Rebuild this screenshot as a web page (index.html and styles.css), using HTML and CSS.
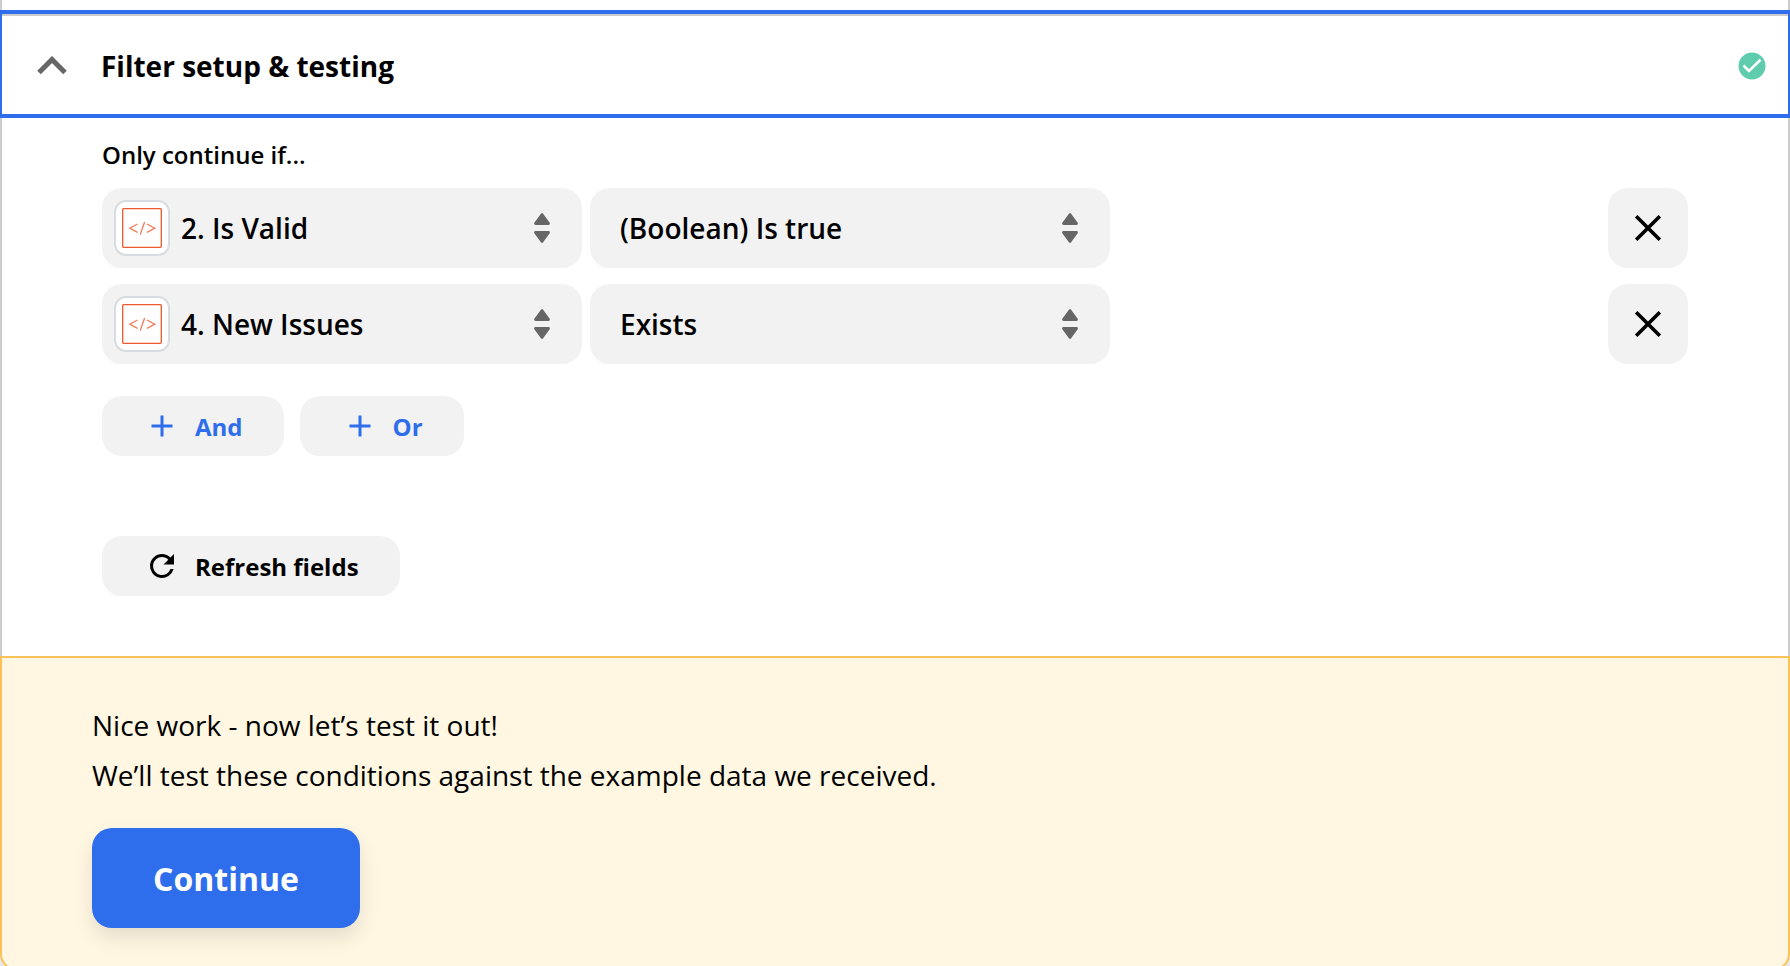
FILE: index.html
```html
<!DOCTYPE html>
<html lang="en">
<head>
<meta charset="utf-8">
<meta name="viewport" content="width=device-width, initial-scale=1">
<title>Filter setup &amp; testing</title>
<link rel="stylesheet" href="styles.css">
</head>
<body>
<svg class="sprite" aria-hidden="true">
  <symbol id="code" viewBox="0 0 40 40">
    <rect x="0.7" y="0.7" width="38.6" height="38.6" rx="0.8" fill="#fff" stroke="#f0592b" stroke-width="1.3"/>
    <path d="M15.5 16 7.8 20.2l7.7 4.2M25 16l7.7 4.2-7.7 4.2M22.6 14l-4.4 12.6" fill="none" stroke="#f27a55" stroke-width="1.3"/>
  </symbol>
  <symbol id="sort" viewBox="0 0 16 30">
    <path d="M6.9.8.5 9.4C-.3 10.500.2 12 1.500 12h13c1.300 0 1.800-1.500 1-2.600L9.100.8a1.400 1.400 0 0 0-2.200 0ZM6.900 29.200.5 20.600C-.3 19.500.2 18 1.500 18h13c1.300 0 1.800 1.500 1 2.600l-6.400 8.600a1.400 1.400 0 0 1-2.200 0Z" fill="#666"/>
  </symbol>
  <symbol id="close" viewBox="0 0 28 28">
    <path d="m2.200 2.200 23.600 23.600m0-23.600L2.200 25.800" fill="none" stroke="#000" stroke-width="3.600"/>
  </symbol>
  <symbol id="plus" viewBox="0 0 36 36">
    <path d="M18 7.500v21M7.500 18h21" fill="none" stroke="#2e6eec" stroke-width="3"/>
  </symbol>
</svg>
<main class="step">
  <div class="step-lead"></div>
  <header class="step-header">
    <button class="toggle" type="button" aria-expanded="true" aria-controls="filter-body">
      <svg class="chevron" viewBox="0 0 30 20" aria-hidden="true"><path d="M2 16.500 15 3.500l13 13" fill="none" stroke="#666" stroke-width="5"/></svg>
      <span class="title">Filter setup &amp; testing</span>
    </button>
    <svg class="status" viewBox="0 0 28 28" role="img" aria-label="Complete"><circle cx="14" cy="14" r="13.500" fill="#5fcdad"/><path d="m5.500 13.500 5.500 5.500L22.500 7.800" fill="none" stroke="#fff" stroke-width="2.600"/></svg>
  </header>

  <section class="filters" id="filter-body">
    <h2 class="filters-label">Only continue if...</h2>
    <div class="conditions">
      <div class="condition">
        <div class="field">
          <select class="select has-icon" aria-label="First field"><option>2. Is Valid</option></select>
          <span class="app-icon"><svg viewBox="0 0 40 40" aria-hidden="true"><use href="#code"/></svg></span>
          <svg class="sort" viewBox="0 0 16 30" aria-hidden="true"><use href="#sort"/></svg>
        </div>
        <div class="field">
          <select class="select" aria-label="First rule"><option>(Boolean) Is true</option></select>
          <svg class="sort" viewBox="0 0 16 30" aria-hidden="true"><use href="#sort"/></svg>
        </div>
        <button class="remove" type="button" aria-label="Remove first condition"><svg viewBox="0 0 28 28" aria-hidden="true"><use href="#close"/></svg></button>
      </div>
      <div class="condition">
        <div class="field">
          <select class="select has-icon" aria-label="Second field"><option>4. New Issues</option></select>
          <span class="app-icon"><svg viewBox="0 0 40 40" aria-hidden="true"><use href="#code"/></svg></span>
          <svg class="sort" viewBox="0 0 16 30" aria-hidden="true"><use href="#sort"/></svg>
        </div>
        <div class="field">
          <select class="select" aria-label="Second rule"><option>Exists</option></select>
          <svg class="sort" viewBox="0 0 16 30" aria-hidden="true"><use href="#sort"/></svg>
        </div>
        <button class="remove" type="button" aria-label="Remove second condition"><svg viewBox="0 0 28 28" aria-hidden="true"><use href="#close"/></svg></button>
      </div>
    </div>
    <div class="actions">
      <button class="action add" type="button"><svg viewBox="0 0 36 36" aria-hidden="true"><use href="#plus"/></svg>And</button>
      <button class="action add" type="button"><svg viewBox="0 0 36 36" aria-hidden="true"><use href="#plus"/></svg>Or</button>
    </div>
    <button class="action" type="button"><svg viewBox="0 0 24 24" aria-hidden="true"><path d="M17.650 6.350A7.960 7.960 0 0 0 12 4a8 8 0 1 0 7.730 10h-2.080A6 6 0 1 1 12 6c1.660 0 3.140.690 4.220 1.780L13 11h7V4z"/></svg>Refresh fields</button>
  </section>

  <section class="test">
    <p class="test-text">Nice work - now let’s test it out!</p>
    <p class="test-text">We’ll test these conditions against the example data we received.</p>
    <button class="continue" type="button">Continue</button>
  </section>
</main>
</body>
</html>
```
FILE: styles.css
```css
* {
  box-sizing: border-box;
}

body {
  height: 100vh;
  margin: 0;
  overflow: hidden;
  background: #e8e8e8;
  color: #000;
  font-family: "Open Sans", "Noto Sans", sans-serif;
}

button,
select {
  margin: 0;
  border: 0;
  color: inherit;
  font: inherit;
  cursor: pointer;
}

svg {
  display: block;
  flex: none;
}

.sprite {
  position: absolute;
  width: 0;
  height: 0;
}

.step-lead {
  height: 10px;
  border: solid #ccc;
  border-width: 0 2px;
  background: #fff;
}

.step-header {
  display: flex;
  align-items: center;
  justify-content: space-between;
  height: 108px;
  padding: 4px 22px 0 35px;
  border: solid #2e6eec;
  border-width: 4px 2px;
  background: #fff;
  box-shadow: inset 0 2px #ccc;
}

.toggle {
  display: flex;
  align-items: center;
  gap: 34px;
  padding: 0;
  background: none;
}

.chevron {
  width: 30px;
  height: 20px;
}

.title {
  font-size: 28px;
  font-weight: 700;
  line-height: 40px;
}

.status {
  width: 28px;
  height: 28px;
}

.filters {
  padding: 19px 100px 60px;
  border: solid #ccc;
  border-width: 0 2px;
  background: #fff;
}

.filters-label {
  margin: 0 0 15px;
  font-size: 24px;
  font-weight: 600;
  line-height: 36px;
}

.conditions {
  display: grid;
  gap: 16px;
}

.condition {
  display: grid;
  grid-template-columns: 480fr 520fr 482fr 80px;
  gap: 8px;
}

.field {
  position: relative;
}

.select {
  width: 100%;
  height: 80px;
  padding: 0 64px 0 30px;
  border-radius: 20px;
  background: #f2f2f2;
  font-size: 28px;
  font-weight: 600;
  appearance: none;
}

.has-icon {
  padding-left: 79px;
}

.app-icon {
  position: absolute;
  top: 12px;
  left: 12px;
  padding: 6px;
  border: 2px solid #d8dce1;
  border-radius: 12px;
  background: #fff;
  pointer-events: none;
}

.app-icon svg {
  width: 40px;
  height: 40px;
}

.sort {
  position: absolute;
  top: 25px;
  right: 32px;
  width: 16px;
  height: 30px;
  pointer-events: none;
}

.remove {
  display: grid;
  grid-column: 4;
  place-items: center;
  padding: 0;
  border-radius: 20px;
  background: #f2f2f2;
}

.remove svg {
  width: 28px;
  height: 28px;
}

.actions {
  display: flex;
  gap: 16px;
  margin: 32px 0 80px;
}

.action {
  display: flex;
  align-items: center;
  gap: 15px;
  height: 60px;
  padding: 0 41px 0 42px;
  border-radius: 20px;
  background: #f2f2f2;
  font-size: 24px;
  font-weight: 700;
}

.action svg {
  width: 36px;
  height: 36px;
}

.add {
  color: #2e6eec;
}

.test {
  padding: 42px 90px 40px;
  border: 2px solid #fcc259;
  border-radius: 0 0 16px 16px;
  background: #fff7e2;
}

.test-text {
  margin: 0;
  font-size: 28px;
  line-height: 50px;
}

.continue {
  height: 100px;
  margin-top: 28px;
  padding: 0 61px;
  border-radius: 20px;
  background: #2e6eec;
  box-shadow: 0 10px 20px rgba(0, 0, 0, 0.1);
  color: #fff;
  font-size: 32px;
  font-weight: 700;
}
```
